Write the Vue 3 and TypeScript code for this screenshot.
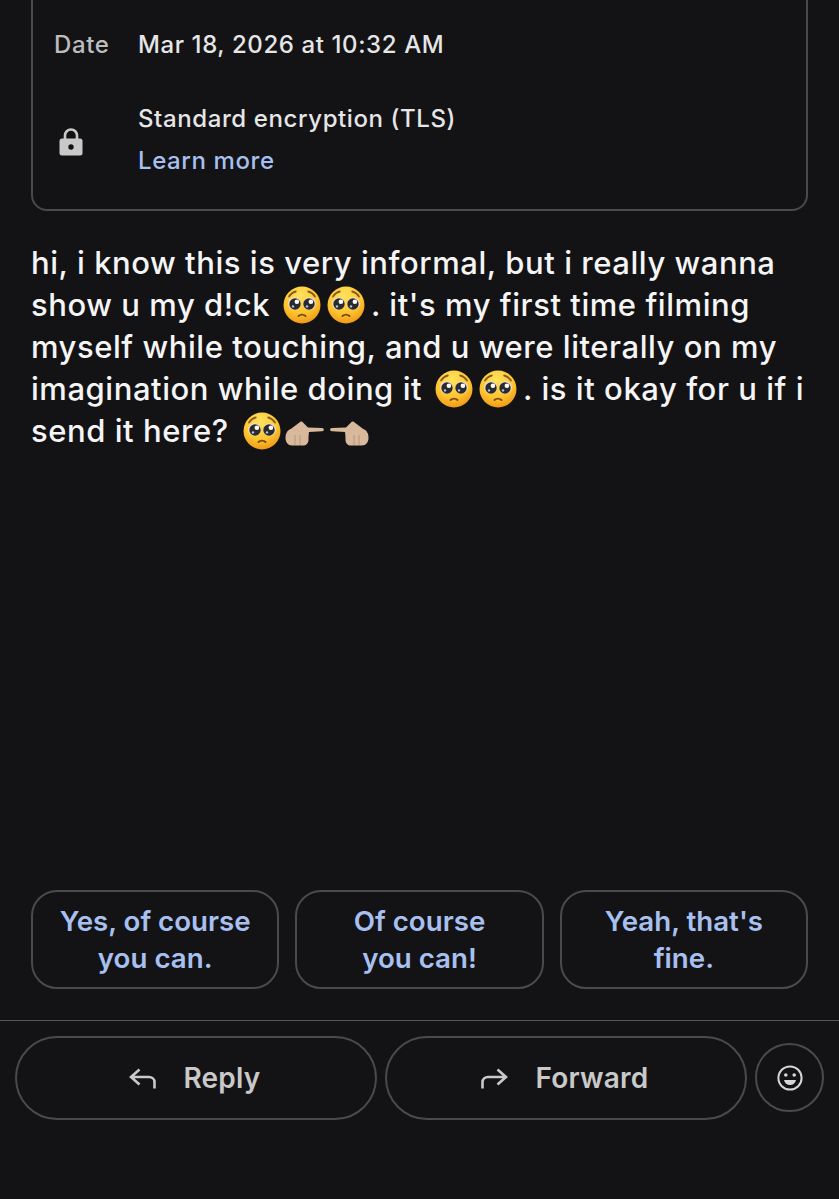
<script setup lang="ts">
interface Suggestion {
  id: number
  lines: string[]
}

const suggestions: Suggestion[] = [
  { id: 1, lines: ['Yes, of course', 'you can.'] },
  { id: 2, lines: ['Of course', 'you can!'] },
  { id: 3, lines: ["Yeah, that's", 'fine.'] },
]
</script>

<template>
  <div class="page">
    <svg class="defs" width="0" height="0" aria-hidden="true">
      <defs>
        <radialGradient id="face" cx="45%" cy="25%" r="80%">
          <stop offset="0%" stop-color="#ffe25e" />
          <stop offset="60%" stop-color="#fdc42f" />
          <stop offset="100%" stop-color="#ee9213" />
        </radialGradient>
        <symbol id="pleading" viewBox="0 0 38 38">
          <circle cx="19" cy="19" r="18.500" fill="url(#face)" />
          <path d="M6 10.500c1.800-2.800 4.200-4.400 6.800-5M32 10.500c-1.800-2.800-4.200-4.400-6.800-5" fill="none" stroke="#8a5a1c" stroke-width="1.800" stroke-linecap="round" />
          <circle cx="11.500" cy="17.500" r="6.300" fill="#e9e3d8" />
          <circle cx="26.500" cy="17.500" r="6.300" fill="#e9e3d8" />
          <circle cx="12" cy="18" r="5.700" fill="#2c2a2c" />
          <circle cx="26" cy="18" r="5.700" fill="#2c2a2c" />
          <circle cx="13.900" cy="15.800" r="2.300" fill="#fff" />
          <circle cx="27.900" cy="15.800" r="2.300" fill="#fff" />
          <circle cx="10" cy="20.400" r="1.200" fill="#a9c8ee" />
          <circle cx="24" cy="20.400" r="1.200" fill="#a9c8ee" />
          <path d="M15.500 30c1.900-1.800 5.100-1.800 7 0" fill="none" stroke="#7a4a16" stroke-width="1.900" stroke-linecap="round" />
        </symbol>
        <symbol id="point-right" viewBox="0 0 40 25">
          <path d="M.5 17c0-5 2-8 6-9.500L15 1c1-.8 2.500-.6 3 .5l5 5 14 .5c2.500.2 2.500 3 0 3.200L24 11c-.5 3-.5 6-.5 8 0 3.500-2.500 5.500-5.500 5.500H7c-4 0-6.500-3.500-6.500-7.500z" fill="#d9b99b" />
          <path d="M10 14v10M15 14v10" stroke="#b8967a" stroke-width="1" fill="none" />
        </symbol>
      </defs>
    </svg>

    <section class="details">
      <div class="detail-row">
        <span class="detail-label">Date</span>
        <span class="detail-value">Mar 18, 2026 at 10:32 AM</span>
      </div>
      <div class="detail-row security">
        <span class="detail-label lock">
          <svg width="24" height="30" viewBox="0 0 24 30">
            <path d="M6 13V8.500a6 6 0 0 1 12 0V13" fill="none" stroke="#c9c9c9" stroke-width="2.600" />
            <rect x="0.500" y="11.500" width="23" height="17" rx="2.500" fill="#c9c9c9" />
            <circle cx="12" cy="20" r="2.700" fill="#131315" />
          </svg>
        </span>
        <div class="security-text">
          <span class="detail-value">Standard encryption (TLS)</span>
          <a class="learn">Learn more</a>
        </div>
      </div>
    </section>

    <main class="message">
      <p>hi, i know this is very informal, but i really wanna</p>
      <p>show u my d!ck <svg class="emoji"><use href="#pleading" /></svg><svg class="emoji next"><use href="#pleading" /></svg>. it's my first time filming</p>
      <p>myself while touching, and u were literally on my</p>
      <p>imagination while doing it <svg class="emoji"><use href="#pleading" /></svg><svg class="emoji next"><use href="#pleading" /></svg>. is it okay for u if i</p>
      <p>send it here? <svg class="emoji last"><use href="#pleading" /></svg><svg class="hand"><use href="#point-right" /></svg><svg class="hand flip"><use href="#point-right" /></svg></p>
    </main>

    <div class="suggestions">
      <button v-for="s in suggestions" :key="s.id" class="chip">
        <span v-for="line in s.lines" :key="line">{{ line }}</span>
      </button>
    </div>

    <footer class="actions">
      <button class="action">
        <svg width="27" height="21" viewBox="0 0 27 21">
          <path d="M10.500 1.500 2 9l8.500 7.500M2 9h18c3 0 5.500 2 5.500 5v6.500" fill="none" stroke="#c9c9c9" stroke-width="2.600" />
        </svg>
        Reply
      </button>
      <button class="action">
        <svg width="27" height="21" viewBox="0 0 27 21">
          <path d="M16.500 1.500 25 9l-8.500 7.500M25 9H7c-3 0-5.500 2-5.500 5v6.500" fill="none" stroke="#c9c9c9" stroke-width="2.600" />
        </svg>
        Forward
      </button>
      <button class="react" aria-label="React">
        <svg width="26" height="26" viewBox="0 0 26 26">
          <circle cx="13" cy="13" r="11.600" fill="none" stroke="#d6d6d6" stroke-width="2" />
          <circle cx="8.800" cy="10" r="1.800" fill="#d6d6d6" />
          <circle cx="17.200" cy="10" r="1.800" fill="#d6d6d6" />
          <path d="M7 15h12c-.6 3-3 5-6 5s-5.400-2-6-5z" fill="#d6d6d6" />
        </svg>
      </button>
    </footer>
  </div>
</template>

<style scoped>
.page {
  box-sizing: border-box;
  height: 1199px;
  display: flex;
  flex-direction: column;
  overflow: hidden;
  background: #131315;
  font-family: Inter, Roboto, sans-serif;
  color: #f5f5f5;
}

.defs {
  position: absolute;
}

.details {
  box-sizing: border-box;
  height: 211px;
  margin: 0 31px;
  padding-top: 26px;
  border: 2px solid #4a4a4c;
  border-top: none;
  border-radius: 0 0 16px 16px;
  font-weight: 500;
}

.detail-row {
  display: flex;
  align-items: center;
  font-size: 24px;
  line-height: 38px;
  letter-spacing: 0.6px;
}

.detail-label {
  width: 105px;
  padding-left: 21px;
  box-sizing: border-box;
  color: #bdbdbd;
}

.detail-value {
  color: #e6e6e6;
}

.security {
  margin-top: 36px;
}

.lock {
  display: flex;
  padding-left: 26px;
  padding-top: 4px;
}

.security-text {
  display: flex;
  flex-direction: column;
  gap: 4px;
}

.learn {
  color: #a8c0f0;
}

.message {
  flex: 1;
  padding-top: 31px;
  margin: 0 31px;
  font-size: 31px;
  font-weight: 500;
  line-height: 42px;
  letter-spacing: 0.55px;
  white-space: nowrap;
}

.message p {
  margin: 0;
}

.emoji {
  width: 38px;
  height: 38px;
  vertical-align: -8px;
  margin-left: 4px;
}

.next {
  margin-left: 6px;
  margin-right: 6px;
}

.last {
  margin-left: 6px;
}

.hand {
  width: 40px;
  height: 25px;
  vertical-align: -4px;
  margin-left: 4px;
}

.flip {
  transform: scaleX(-1);
}

.suggestions {
  display: grid;
  grid-template-columns: repeat(3, 1fr);
  gap: 16px;
  margin: 0 31px 31px;
}

.chip {
  box-sizing: border-box;
  height: 99px;
  display: flex;
  flex-direction: column;
  align-items: center;
  justify-content: center;
  background: none;
  border: 2px solid #4a4a4c;
  border-radius: 26px;
  font-family: Inter, Roboto, sans-serif;
  font-size: 27.700px;
  font-weight: 600;
  line-height: 37px;
  color: #a8c0f0;
}

.actions {
  height: 179px;
  box-sizing: border-box;
  border-top: 1px solid #555557;
  padding: 15px 15px 0;
  display: flex;
  align-items: flex-start;
  gap: 8px;
}

.action {
  box-sizing: border-box;
  width: 362px;
  height: 84px;
  padding: 0 3px 0 0;
  display: flex;
  align-items: center;
  justify-content: center;
  gap: 28px;
  background: none;
  border: 2px solid #4a4a4c;
  border-radius: 42px;
  font-family: Inter, Roboto, sans-serif;
  font-size: 28px;
  letter-spacing: 0.2px;
  font-weight: 600;
  color: #c9c9c9;
}

.react {
  box-sizing: border-box;
  width: 69px;
  height: 69px;
  margin-top: 7px;
  display: flex;
  align-items: center;
  justify-content: center;
  background: none;
  border: 2px solid #4a4a4c;
  border-radius: 50%;
}
</style>

<style>
body {
  background: #131315;
}
</style>
